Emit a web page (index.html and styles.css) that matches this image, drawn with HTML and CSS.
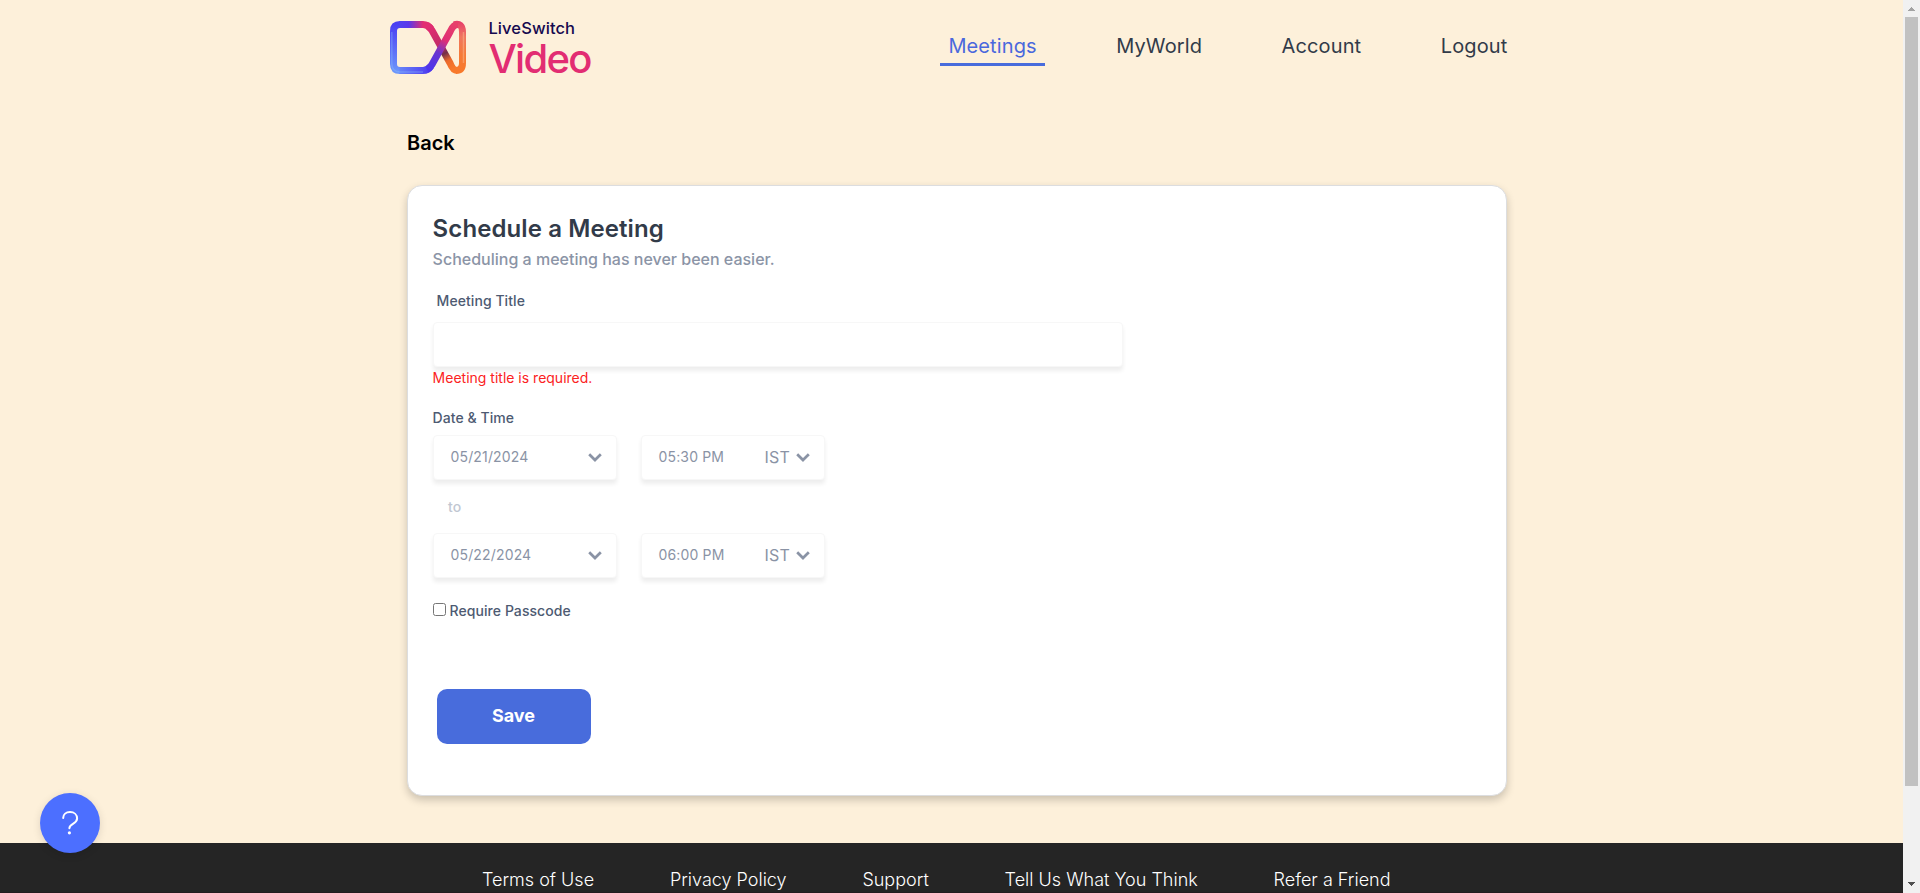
FILE: index.html
```html
<!DOCTYPE html>
<html lang="en">
<head>
<meta charset="utf-8">
<title>Schedule a Meeting</title>
<link rel="stylesheet" href="styles.css">
</head>
<body>
<div class="page">
  <main class="content">
    <header class="header">
      <svg class="logo" width="100" height="75" viewBox="0 0 100 75">
        <defs>
          <linearGradient id="top" gradientUnits="userSpaceOnUse" x1="12" y1="0" x2="60" y2="0"><stop offset="0" stop-color="#4c49f4"/><stop offset=".35" stop-color="#5b37ea"/><stop offset=".65" stop-color="#e22d72"/></linearGradient>
          <linearGradient id="left" gradientUnits="userSpaceOnUse" x1="0" y1="14" x2="0" y2="62"><stop offset="0" stop-color="#4b3ff2"/><stop offset="1" stop-color="#6c96fb"/></linearGradient>
          <linearGradient id="bottom" gradientUnits="userSpaceOnUse" x1="12" y1="0" x2="52" y2="0"><stop offset="0" stop-color="#6c96fb"/><stop offset="1" stop-color="#4c35ee"/></linearGradient>
          <linearGradient id="rise" gradientUnits="userSpaceOnUse" x1="48" y1="60" x2="75" y2="15"><stop offset="0" stop-color="#4c35ee"/><stop offset=".38" stop-color="#6a35d0"/><stop offset=".65" stop-color="#df2e75"/><stop offset="1" stop-color="#e73f6b"/></linearGradient>
          <linearGradient id="right" gradientUnits="userSpaceOnUse" x1="0" y1="12" x2="0" y2="62"><stop offset="0" stop-color="#e73f6b"/><stop offset=".3" stop-color="#f0765f"/><stop offset=".65" stop-color="#f57a38"/><stop offset="1" stop-color="#f8792b"/></linearGradient>
          <linearGradient id="fall" gradientUnits="userSpaceOnUse" x1="50" y1="16" x2="73" y2="59"><stop offset="0" stop-color="#e22d72"/><stop offset=".5" stop-color="#bd2b65"/><stop offset=".64" stop-color="#713049"/><stop offset=".8" stop-color="#ec6a2b"/><stop offset="1" stop-color="#f8792b"/></linearGradient>
        </defs>
        <g fill="none" stroke-width="7">
          <path stroke="url(#left)" d="M20 14.500Q13.500 14.500 13.500 21V54Q13.500 60.500 20 60.500"/>
          <path stroke="url(#top)" d="M19.500 14.500H43Q48 14.500 51 19"/>
          <path stroke="url(#fall)" d="M47 15.500Q50 17 52 20.500L70 53Q73 60.500 77 60.500"/>
          <path stroke="url(#right)" d="M74 14.800Q82.500 12.500 82.500 22V53Q82.500 60.500 76 60.500"/>
          <path stroke="url(#bottom)" d="M19.500 60.500H43Q48 60.500 51 56"/>
          <path stroke="url(#rise)" d="M47 59.500Q50 58 52 54.500L70 22Q73 14.500 78 14.500"/>
        </g>
        <path d="M11.800 22V54Q12 61.800 20 62H43" fill="none" stroke="#8fc0ff" stroke-opacity=".35" stroke-width="1.500"/>
        <path d="M83.500 22V53" stroke="#ffc49a" stroke-opacity=".45" stroke-width="1.500"/>
      </svg>
      <div class="wordmark">
        <span class="logo-brand">LiveSwitch</span>
        <span class="logo-product">Video</span>
      </div>
      <nav class="nav">
        <a class="nav-link nav-link-active">Meetings</a>
        <a class="nav-link">MyWorld</a>
        <a class="nav-link">Account</a>
        <a class="nav-link">Logout</a>
      </nav>
    </header>

    <a class="back">Back</a>

    <section class="card">
      <h1 class="title">Schedule a Meeting</h1>
      <p class="subtitle">Scheduling a meeting has never been easier.</p>
      <label class="label label-title" for="title">Meeting Title</label>
      <input class="field title-input" id="title" type="text">
      <p class="error">Meeting title is required.</p>
      <div class="label label-date">Date &amp; Time</div>
      <div class="row">
        <div class="field picker"><span class="value">05/21/2024</span><svg class="chevron" width="14" height="9" viewBox="0 0 14 9"><path d="M1.200 1.200L7 7L12.800 1.200"/></svg></div>
        <div class="field picker"><span class="value">05:30 PM</span><span class="zone"><span class="value">IST</span><svg class="chevron" width="14" height="9" viewBox="0 0 14 9"><path d="M1.200 1.200L7 7L12.800 1.200"/></svg></span></div>
      </div>
      <div class="to">to</div>
      <div class="row">
        <div class="field picker"><span class="value">05/22/2024</span><svg class="chevron" width="14" height="9" viewBox="0 0 14 9"><path d="M1.200 1.200L7 7L12.800 1.200"/></svg></div>
        <div class="field picker"><span class="value">06:00 PM</span><span class="zone"><span class="value">IST</span><svg class="chevron" width="14" height="9" viewBox="0 0 14 9"><path d="M1.200 1.200L7 7L12.800 1.200"/></svg></span></div>
      </div>
      <div class="passcode"><input class="checkbox" type="checkbox" id="pass"><label class="label" for="pass">Require Passcode</label></div>
      <button class="save">Save</button>
    </section>
  </main>

  <footer class="footer">
    <a>Terms of Use</a>
    <a>Privacy Policy</a>
    <a>Support</a>
    <a>Tell Us What You Think</a>
    <a>Refer a Friend</a>
  </footer>
</div>

<div class="scrollbar">
  <svg class="arrow" width="17" height="17" shape-rendering="crispEdges"><path fill="#a3a3a3" d="M5 10h7v1H5zM6 9h5v1H6zM7 8h3v1H7zM8 7h1v1H8z"/></svg>
  <div class="thumb"></div>
  <svg class="arrow" width="17" height="17" shape-rendering="crispEdges"><path fill="#505050" d="M5 6h7v1H5zM6 7h5v1H6zM7 8h3v1H7zM8 9h1v1H8z"/></svg>
</div>

<div class="help">
  <svg width="60" height="60" viewBox="0 0 60 60" fill="none"><path d="M23.200 25C23.200 21.500 26 19.100 30 19.100C34.200 19.100 37.100 21.800 37.100 25.500C37.100 31 29.400 30.700 29.400 35.200" stroke="#fff" stroke-width="2" stroke-linecap="round"/><circle cx="29.400" cy="39.800" r="1.600" fill="#fff"/></svg>
</div>
</body>
</html>
```

FILE: styles.css
```css
* { box-sizing: border-box; }

body {
  display: flex;
  height: 893px;
  margin: 0;
  overflow: hidden;
  background: #fdf0da;
  font-family: Inter, "Liberation Sans", sans-serif;
}

h1, p { margin: 0; }

.page { flex: 1; display: flex; flex-direction: column; }

.content {
  flex: none;
  display: flex;
  flex-direction: column;
  height: 843px;
  padding-left: 407px;
}

.header { display: flex; height: 122px; }

.logo { flex: none; margin: 10px 0 0 -27px; }

.wordmark { display: flex; flex-direction: column; width: 111px; margin-left: 8.4px; padding-top: 20px; }

.logo-brand { color: #15094f; font-size: 16.5px; font-weight: 500; line-height: 17px; letter-spacing: .1px; }

.logo-product {
  color: #e22d72;
  font-size: 40px;
  font-weight: 500;
  line-height: 44px;
  letter-spacing: -1.7px;
}

.nav {
  display: flex;
  gap: 62.7px;
  margin: 26px 0 0 340.6px;
}

.nav-link {
  height: 40px;
  padding: 0 8.4px;
  color: #323b49;
  font-size: 20px;
  line-height: 40px;
  letter-spacing: .12px;
}

.nav-link-active { color: #4a68dd; border-bottom: 3px solid #486cdc; }

.back {
  height: 63px;
  font-size: 20px;
  font-weight: 600;
  line-height: 42px;
  color: #000;
}

.card {
  width: 1100px;
  height: 611px;
  padding: 26px 25px 0 24.6px;
  border: 1px solid #dcdddf;
  border-radius: 15px;
  background: #fff;
  box-shadow: 0 4px 8px rgba(0, 0, 0, .2);
}

.title { color: #323b49; font-size: 24px; font-weight: 600; line-height: 34px; letter-spacing: .1px; }

.subtitle { color: #8b94a6; font-size: 16px; font-weight: 500; line-height: 26px; }

.label { display: block; color: #4d5a72; font-size: 14px; font-weight: 500; line-height: 20px; letter-spacing: .06px; }

.label-title { margin: 19px 0 11px 4px; }

.field {
  display: flex;
  border: 1px solid #f7f7f7;
  border-radius: 4px;
  background: #fff;
  box-shadow: 0 4px 4px rgba(0, 0, 0, .07);
}

.title-input { width: 690px; height: 45px; margin-left: .4px; outline: 0; }

.error { margin-top: 1px; color: #fb2222; font-size: 14px; line-height: 20px; }

.label-date { margin: 20px 0 7px; }

.row { display: flex; gap: 24px; margin-left: .4px; }

.picker {
  align-items: center;
  justify-content: space-between;
  width: 184px;
  height: 45px;
  padding: 0 14px 0 16.5px;
  color: #8a93a5;
  font-size: 14px;
  letter-spacing: .16px;
}

.value { padding-bottom: 2px; }

.zone { display: flex; align-items: center; gap: 6px; font-size: 16px; }

.chevron { fill: none; stroke: #8a93a5; stroke-width: 2.7; }

.to { height: 53px; padding-left: 15.5px; color: #c1c7d2; font-size: 14px; font-weight: 500; line-height: 53px; }

.passcode { display: flex; gap: 4px; margin-top: 23px; }

.checkbox { width: 13px; height: 13px; margin: 2px 0 0; }

.save {
  display: block;
  width: 154px;
  height: 55px;
  margin: 68px 0 0 4.4px;
  padding: 0 1px 1px 0;
  border: 0;
  border-radius: 10px;
  background: #486cdc;
  color: #fff;
  font: 700 18px/54px Inter, sans-serif;
}

.footer {
  display: flex;
  gap: 75.8px;
  height: 50px;
  padding: 26px 0 0 482px;
  border-bottom: 1px solid #241d20;
  background: #252525;
  color: #fff;
  font-size: 18px;
  font-weight: 300;
  line-height: 22px;
  white-space: nowrap;
}

.scrollbar { display: flex; flex-direction: column; flex: none; width: 17px; background: #f1f1f1; }

.arrow { flex: none; display: block; }

.thumb { width: 13px; height: 769px; margin: 0 2px auto; background: #c1c1c1; }

.help {
  position: absolute;
  top: 793px;
  left: 40px;
  width: 60px;
  height: 60px;
  border-radius: 50%;
  background: #4c6fff;
  box-shadow: 0 2px 8px rgba(0, 0, 0, .12);
}
```
